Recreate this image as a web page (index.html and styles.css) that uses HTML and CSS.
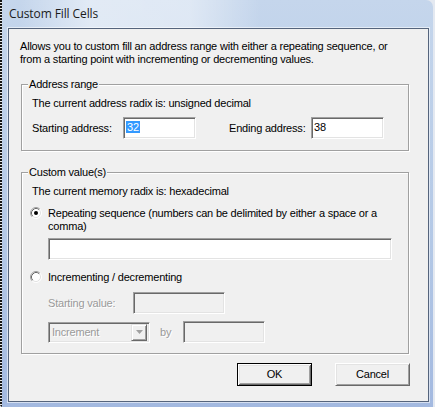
FILE: index.html
```html
<!DOCTYPE html>
<html>
<head>
<meta charset="utf-8">
<title>Custom Fill Cells</title>
<link rel="stylesheet" href="styles.css">
</head>
<body>
<div class="window">
  <div class="titlebar"><span class="title">Custom Fill Cells</span></div>
  <div class="client">
    <p class="desc">Allows you to custom fill an address range with either a repeating sequence, or<br>from a starting point with incrementing or decrementing values.</p>

    <fieldset class="group group-address">
      <legend>Address range</legend>
      <div class="group-body">
        <div class="line">The current address radix is: unsigned decimal</div>
        <div class="addr-row">
          <span class="lbl lbl-start">Starting address:</span>
          <div class="edit edit-addr"><span class="sel">32</span></div>
          <span class="lbl lbl-end">Ending address:</span>
          <div class="edit edit-addr">38</div>
        </div>
      </div>
    </fieldset>

    <fieldset class="group group-values">
      <legend>Custom value(s)</legend>
      <div class="group-body group-body-values">
        <div class="line">The current memory radix is: hexadecimal</div>
        <div class="radio-row rep-row">
          <svg class="radio" width="12" height="12" viewBox="0 0 12 12">
            <circle cx="6" cy="6" r="5" fill="#fff"/>
            <path d="M2.11 9.89 A5.5 5.5 0 0 1 9.89 2.11" fill="none" stroke="#a0a0a0"/>
            <path d="M9.89 2.11 A5.5 5.5 0 0 1 2.11 9.89" fill="none" stroke="#ffffff"/>
            <path d="M2.82 9.18 A4.5 4.5 0 0 1 9.18 2.82" fill="none" stroke="#696969"/>
            <path d="M9.18 2.82 A4.5 4.5 0 0 1 2.82 9.18" fill="none" stroke="#e3e3e3"/>
            <circle cx="6" cy="6" r="2" fill="#000"/>
          </svg>
          <span class="radio-text">Repeating sequence (numbers can be delimited by either a space or a<br>comma)</span>
        </div>
        <div class="edit edit-seq"></div>
        <div class="radio-row inc-row">
          <svg class="radio" width="12" height="12" viewBox="0 0 12 12">
            <circle cx="6" cy="6" r="5" fill="#fff"/>
            <path d="M2.11 9.89 A5.5 5.5 0 0 1 9.89 2.11" fill="none" stroke="#a0a0a0"/>
            <path d="M9.89 2.11 A5.5 5.5 0 0 1 2.11 9.89" fill="none" stroke="#ffffff"/>
            <path d="M2.82 9.18 A4.5 4.5 0 0 1 9.18 2.82" fill="none" stroke="#696969"/>
            <path d="M9.18 2.82 A4.5 4.5 0 0 1 2.82 9.18" fill="none" stroke="#e3e3e3"/>
          </svg>
          <span class="radio-text">Incrementing / decrementing</span>
        </div>
        <div class="start-row">
          <span class="lbl lbl-sv disabled">Starting value:</span>
          <div class="edit edit-sv edit-disabled"></div>
        </div>
        <div class="combo-row">
          <div class="combo">
            <span class="combo-text disabled">Increment</span>
            <span class="combo-btn">
              <svg width="7" height="5" viewBox="0 0 7 5"><polygon points="0,0 7,0 3.5,4" fill="#a0a0a0"/></svg>
            </span>
          </div>
          <span class="lbl lbl-by disabled">by</span>
          <div class="edit edit-by edit-disabled"></div>
        </div>
      </div>
    </fieldset>

    <div class="buttons">
      <button class="btn btn-default">OK</button>
      <button class="btn">Cancel</button>
    </div>
  </div>
</div>
</body>
</html>
```
FILE: styles.css
```css
* { box-sizing: border-box; }
html, body { margin: 0; padding: 0; }
body {
  width: 435px;
  height: 407px;
  overflow: hidden;
  background: #e4e9f1;
  font-family: "Liberation Sans", Arial, sans-serif;
  font-size: 11px;
  line-height: 13px;
  color: #000;
}

.window {
  width: 433px;
  height: 407px;
  padding: 0 4px 5px 8px;
  display: flex;
  flex-direction: column;
  border-top-right-radius: 7px;
  border-bottom-left-radius: 3px;
  background:
    repeating-linear-gradient(to bottom, #161616 0 2px, #e6e6e6 2px 3px) 0 0 / 2px 100% no-repeat,
    linear-gradient(to right, rgba(255,255,255,0) 20px, rgba(255,255,255,.5) 90px, rgba(255,255,255,.45) 190px, rgba(255,255,255,0) 260px) 0 0 / 100% 28px no-repeat,
    linear-gradient(to bottom, #c5d6ec 0, #b3c8e6 60%, #a3b9e0 100%);
}

.titlebar {
  height: 28px;
  flex-shrink: 0;
  display: flex;
  align-items: center;
  padding: 0 0 1px 1px;
  font-family: "Open Sans", "Noto Sans", sans-serif;
  font-size: 12px;
  color: #1b1b1b;
  letter-spacing: -0.1px;
}

.client {
  flex: 1;
  border: 1px solid #55647c;
  box-shadow: 0 0 0 1px rgba(255,255,255,.55);
  background: #f0f0f0;
  padding: 11px 0 0 11px;
  display: flex;
  flex-direction: column;
}

.desc, .line, .radio-text, .lbl, .edit, .btn, legend, .combo-text {
  letter-spacing: -0.2px;
}

.desc { margin: 0; }

.group {
  margin: 0 0 0 1px;
  padding: 0;
  width: 388px;
  min-width: 0;
  border: 1px solid #a0a0a0;
  box-shadow: inset 1px 1px 0 #fff, 1px 1px 0 #fff;
}
.group legend {
  margin-left: 6px;
  padding: 0 1px;
  background: #f0f0f0;
}

.group-address { margin-top: 12px; }
.group-values { margin-top: 15px; }

.group-body { padding: 6px 10px 11px 10px; }
.group-body-values { padding-bottom: 10px; }

.addr-row {
  display: flex;
  align-items: center;
  margin-top: 7px;
}
.lbl-start { width: 91px; }
.lbl-end { width: 82px; margin-left: 33px; }

.edit {
  height: 22px;
  border: 1px solid;
  border-color: #a0a0a0 #fff #fff #a0a0a0;
  box-shadow: inset 1px 1px 0 #696969, inset -1px -1px 0 #e3e3e3;
  background: #fff;
  padding: 3px 0 0 2px;
}
.edit-disabled { background: #f0f0f0; }
.edit-addr { width: 73px; }
.sel { background: #3399ff; color: #fff; padding: 0 1px; }

.radio-row {
  display: flex;
  align-items: flex-start;
  margin-left: -2px;
}
.radio { flex-shrink: 0; margin-right: 6px; display: block; }
.rep-row { margin-top: 9px; }
.inc-row { margin-top: 11px; }

.edit-seq { width: 344px; margin: 5px 0 0 16px; }

.disabled { color: #9a9a9a; text-shadow: 1px 1px 0 #fff; }

.start-row {
  display: flex;
  align-items: center;
  margin: 8px 0 0 16px;
}
.lbl-sv { width: 85px; }
.edit-sv { width: 92px; }

.combo-row {
  display: flex;
  align-items: center;
  margin: 7px 0 0 16px;
}
.combo {
  width: 102px;
  height: 21px;
  border: 1px solid;
  border-color: #a0a0a0 #fff #fff #a0a0a0;
  box-shadow: inset 1px 1px 0 #696969, inset -1px -1px 0 #e3e3e3;
  background: #f0f0f0;
  display: flex;
  align-items: center;
  padding: 0 2px 0 2px;
}
.combo-text { flex: 1; padding-left: 1px; }
.combo-btn {
  width: 16px;
  height: 17px;
  background: #f0f0f0;
  border: 1px solid;
  border-color: #e3e3e3 #696969 #696969 #e3e3e3;
  box-shadow: inset 1px 1px 0 #fff, inset -1px -1px 0 #a0a0a0;
  display: flex;
  align-items: center;
  justify-content: center;
}
.combo-btn svg { display: block; }
.lbl-by { width: 23px; margin-left: 10px; }
.edit-by { width: 82px; }

.buttons {
  display: flex;
  justify-content: flex-end;
  gap: 23px;
  margin: 9px 18px 0 0;
}
.btn {
  width: 75px;
  height: 23px;
  margin: 0;
  padding: 0;
  font: inherit;
  color: #000;
  background: #f0f0f0;
  border: 1px solid;
  border-color: #fff #696969 #696969 #fff;
  box-shadow: inset 1px 1px 0 #e3e3e3, inset -1px -1px 0 #a0a0a0;
  display: flex;
  align-items: center;
  justify-content: center;
}
.btn-default {
  border-color: #000;
  box-shadow: inset 1px 1px 0 #fff, inset -1px -1px 0 #696969, inset 2px 2px 0 #e3e3e3, inset -2px -2px 0 #a0a0a0;
}
```
